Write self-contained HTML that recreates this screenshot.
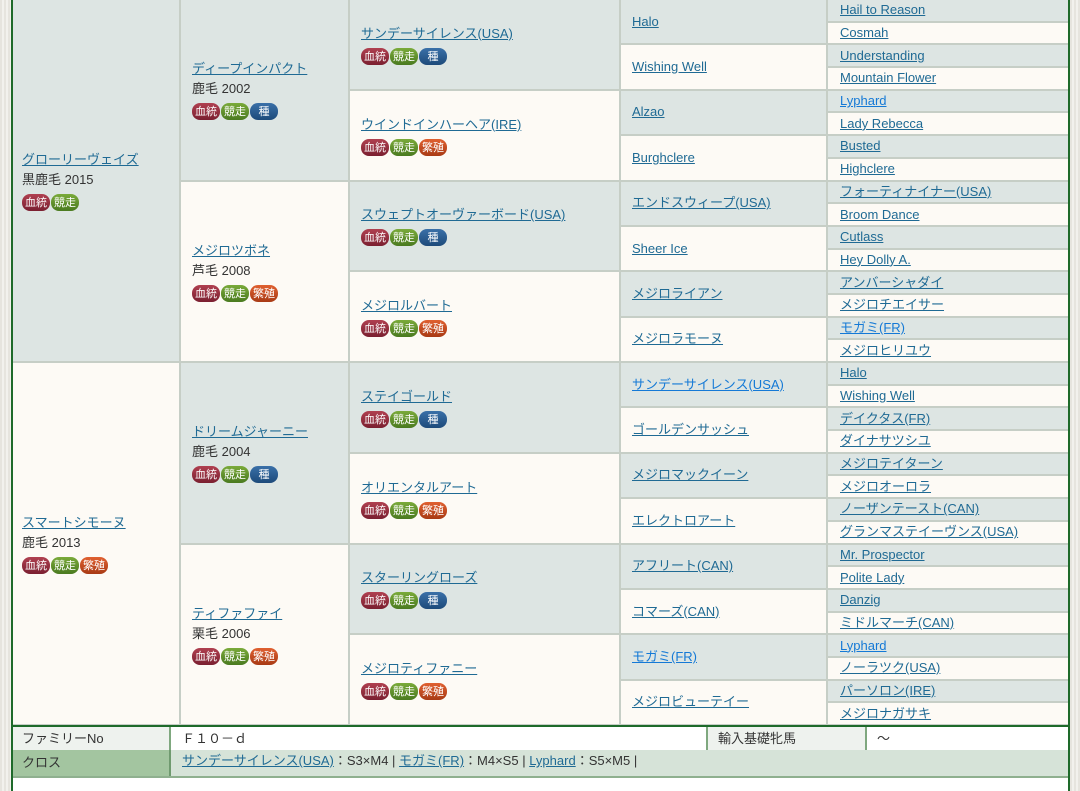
<!DOCTYPE html>
<html><head><meta charset="utf-8"><style>
*{box-sizing:border-box;margin:0;padding:0}
body{width:1080px;height:791px;overflow:hidden;background:#fff;font-family:"Liberation Sans","Noto Sans CJK JP",sans-serif;font-size:13px;color:#333;position:relative}
.ls{position:absolute;left:0;top:0;width:11px;height:791px;background:repeating-linear-gradient(90deg,#e6e4de 0 2px,#f2f1ed 2px 4px)}
.rs{position:absolute;left:1070px;top:0;width:10px;height:791px;background:repeating-linear-gradient(90deg,#e6e4de 0 2px,#f2f1ed 2px 4px)}
.gl{position:absolute;top:0;width:2px;height:791px;background:#1e6a2a}
.col{position:absolute;top:0;height:726px;display:flex;flex-direction:column}
.c{flex:1;border-bottom:2px solid #c6cec6;border-right:2px solid #c6cec6;display:flex;flex-direction:column;justify-content:center;line-height:20px;padding-left:11px}
.g5 .c{border-right:none;line-height:18px;padding-left:12px}
.s{background:#dde5e3}.w{background:#fdfaf5}
a{color:#1f6a94;text-decoration:underline}
a.b{color:#1479d6}
.bd{margin-top:4px;height:17px;display:flex;gap:1px}
.bd span{display:inline-block;height:17px;border-radius:8px;color:#fff;font-size:11px;line-height:17px;text-align:center;width:28px;font-family:"Noto Sans CJK JP",sans-serif}
.r{background:linear-gradient(#b04050,#7a1f30)}.gr{background:linear-gradient(#7aaa3a,#4a7a20)}.bl{background:linear-gradient(#3a70a8,#1d4a7a)}.o{background:linear-gradient(#e06030,#a83a15)}
.ft{position:absolute;left:11px;width:1057px;display:flex;font-size:13px}
</style></head><body>
<div class="ls"></div><div class="rs"></div>
<div class="col g1" style="left:11px;width:170px">
<div class="c s"><a href="#">グローリーヴェイズ</a><div>黒鹿毛 2015</div><div class="bd"><span class="r">血統</span><span class="gr">競走</span></div></div>
<div class="c w"><a href="#">スマートシモーヌ</a><div>鹿毛 2013</div><div class="bd"><span class="r">血統</span><span class="gr">競走</span><span class="o">繁殖</span></div></div>
</div>
<div class="col g2" style="left:181px;width:169px">
<div class="c s"><a href="#">ディープインパクト</a><div>鹿毛 2002</div><div class="bd"><span class="r">血統</span><span class="gr">競走</span><span class="bl">種</span></div></div>
<div class="c w"><a href="#">メジロツボネ</a><div>芦毛 2008</div><div class="bd"><span class="r">血統</span><span class="gr">競走</span><span class="o">繁殖</span></div></div>
<div class="c s"><a href="#">ドリームジャーニー</a><div>鹿毛 2004</div><div class="bd"><span class="r">血統</span><span class="gr">競走</span><span class="bl">種</span></div></div>
<div class="c w"><a href="#">ティファファイ</a><div>栗毛 2006</div><div class="bd"><span class="r">血統</span><span class="gr">競走</span><span class="o">繁殖</span></div></div>
</div>
<div class="col g3" style="left:350px;width:271px">
<div class="c s"><a href="#">サンデーサイレンス(USA)</a><div class="bd"><span class="r">血統</span><span class="gr">競走</span><span class="bl">種</span></div></div>
<div class="c w"><a href="#">ウインドインハーヘア(IRE)</a><div class="bd"><span class="r">血統</span><span class="gr">競走</span><span class="o">繁殖</span></div></div>
<div class="c s"><a href="#">スウェプトオーヴァーボード(USA)</a><div class="bd"><span class="r">血統</span><span class="gr">競走</span><span class="bl">種</span></div></div>
<div class="c w"><a href="#">メジロルバート</a><div class="bd"><span class="r">血統</span><span class="gr">競走</span><span class="o">繁殖</span></div></div>
<div class="c s"><a href="#">ステイゴールド</a><div class="bd"><span class="r">血統</span><span class="gr">競走</span><span class="bl">種</span></div></div>
<div class="c w"><a href="#">オリエンタルアート</a><div class="bd"><span class="r">血統</span><span class="gr">競走</span><span class="o">繁殖</span></div></div>
<div class="c s"><a href="#">スターリングローズ</a><div class="bd"><span class="r">血統</span><span class="gr">競走</span><span class="bl">種</span></div></div>
<div class="c w"><a href="#">メジロティファニー</a><div class="bd"><span class="r">血統</span><span class="gr">競走</span><span class="o">繁殖</span></div></div>
</div>
<div class="col g4" style="left:621px;width:207px">
<div class="c s"><a href="#">Halo</a></div>
<div class="c w"><a href="#">Wishing Well</a></div>
<div class="c s"><a href="#">Alzao</a></div>
<div class="c w"><a href="#">Burghclere</a></div>
<div class="c s"><a href="#">エンドスウィープ(USA)</a></div>
<div class="c w"><a href="#">Sheer Ice</a></div>
<div class="c s"><a href="#">メジロライアン</a></div>
<div class="c w"><a href="#">メジロラモーヌ</a></div>
<div class="c s"><a class="b" href="#">サンデーサイレンス(USA)</a></div>
<div class="c w"><a href="#">ゴールデンサッシュ</a></div>
<div class="c s"><a href="#">メジロマックイーン</a></div>
<div class="c w"><a href="#">エレクトロアート</a></div>
<div class="c s"><a href="#">アフリート(CAN)</a></div>
<div class="c w"><a href="#">コマーズ(CAN)</a></div>
<div class="c s"><a class="b" href="#">モガミ(FR)</a></div>
<div class="c w"><a href="#">メジロビューテイー</a></div>
</div>
<div class="col g5" style="left:828px;width:240px">
<div class="c s"><a href="#">Hail to Reason</a></div>
<div class="c w"><a href="#">Cosmah</a></div>
<div class="c s"><a href="#">Understanding</a></div>
<div class="c w"><a href="#">Mountain Flower</a></div>
<div class="c s"><a class="b" href="#">Lyphard</a></div>
<div class="c w"><a href="#">Lady Rebecca</a></div>
<div class="c s"><a href="#">Busted</a></div>
<div class="c w"><a href="#">Highclere</a></div>
<div class="c s"><a href="#">フォーティナイナー(USA)</a></div>
<div class="c w"><a href="#">Broom Dance</a></div>
<div class="c s"><a href="#">Cutlass</a></div>
<div class="c w"><a href="#">Hey Dolly A.</a></div>
<div class="c s"><a href="#">アンバーシャダイ</a></div>
<div class="c w"><a href="#">メジロチエイサー</a></div>
<div class="c s"><a class="b" href="#">モガミ(FR)</a></div>
<div class="c w"><a href="#">メジロヒリユウ</a></div>
<div class="c s"><a href="#">Halo</a></div>
<div class="c w"><a href="#">Wishing Well</a></div>
<div class="c s"><a href="#">デイクタス(FR)</a></div>
<div class="c w"><a href="#">ダイナサツシユ</a></div>
<div class="c s"><a href="#">メジロテイターン</a></div>
<div class="c w"><a href="#">メジロオーロラ</a></div>
<div class="c s"><a href="#">ノーザンテースト(CAN)</a></div>
<div class="c w"><a href="#">グランマステイーヴンス(USA)</a></div>
<div class="c s"><a href="#">Mr. Prospector</a></div>
<div class="c w"><a href="#">Polite Lady</a></div>
<div class="c s"><a href="#">Danzig</a></div>
<div class="c w"><a href="#">ミドルマーチ(CAN)</a></div>
<div class="c s"><a class="b" href="#">Lyphard</a></div>
<div class="c w"><a href="#">ノーラツク(USA)</a></div>
<div class="c s"><a href="#">パーソロン(IRE)</a></div>
<div class="c w"><a href="#">メジロナガサキ</a></div>
</div>
<div style="position:absolute;left:11px;top:725px;width:1057px;height:2px;background:#1e6a2a"></div>
<div class="ft" style="top:727px;height:23px;line-height:23px;background:#fff">
<div style="width:160px;background:#eef2ee;padding-left:11px;border-right:2px solid #7fa87f">ファミリーNo</div>
<div style="width:537px;padding-left:11px;border-right:2px solid #7fa87f">Ｆ１０－ｄ</div>
<div style="width:159px;background:#eef2ee;padding-left:10px;border-right:2px solid #7fa87f">輸入基礎牝馬</div>
<div style="flex:1;padding-left:10px">～</div>
</div>
<div class="ft" style="top:750px;height:28px;line-height:26px;background:#d6e3d8;border-bottom:2px solid #8fb08f">
<div style="width:160px;background:#a3c5a0;padding-left:11px;border-right:2px solid #6f9a6f">クロス</div>
<div style="flex:1;padding-left:11px;line-height:22px"><a href="#">サンデーサイレンス(USA)</a>：S3×M4 | <a href="#">モガミ(FR)</a>：M4×S5 | <a href="#">Lyphard</a>：S5×M5 |</div>
</div>
<div class="gl" style="left:11px"></div>
<div class="gl" style="left:1068px"></div>
</body></html>
